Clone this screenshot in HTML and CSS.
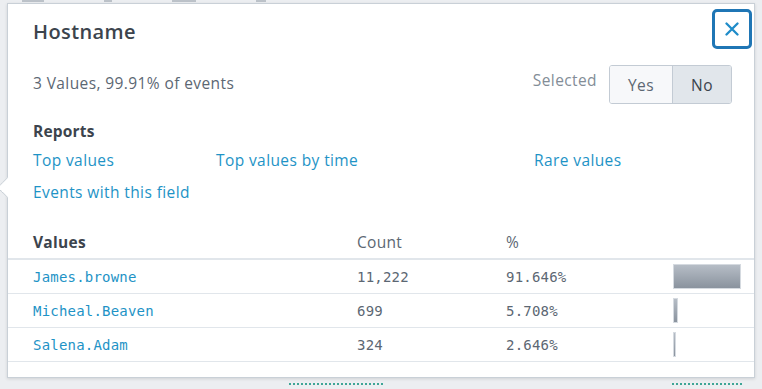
FILE: index.html
```html
<!DOCTYPE html>
<html lang="en">
<head>
    <meta charset="UTF-8">
    <meta name="viewport" content="width=device-width, initial-scale=1.0">
    <title>Field summary - Hostname</title>
    <link rel="stylesheet" href="styles.css">
</head>
<body>
    <!-- what is left visible of the field list behind the popup -->
    <div class="backdrop-top">
        <span class="smudge" style="width: 22px"></span>
        <span class="smudge" style="width: 8px"></span>
        <span class="smudge" style="width: 24px"></span>
        <span class="smudge" style="width: 10px"></span>
    </div>

    <div class="popup">
        <button class="close" title="Close">
            <svg width="14" height="14" viewBox="0 0 14 14">
                <path d="M1.5 1.5 L12.5 12.5 M12.5 1.5 L1.5 12.5" stroke="currentColor" stroke-width="2.3" stroke-linecap="round" fill="none"/>
            </svg>
        </button>

        <div class="popup-head">
            <h1>Hostname</h1>
        </div>

        <div class="summary">
            <span class="summary-text">3 Values, 99.91% of events</span>
            <div class="selected">
                <span class="selected-label">Selected</span>
                <div class="toggle">
                    <button class="toggle-btn">Yes</button>
                    <button class="toggle-btn active">No</button>
                </div>
            </div>
        </div>

        <!-- Reports -->
        <div class="reports">
            <h2>Reports</h2>
            <div class="report-links">
                <a href="#">Top values</a>
                <a href="#">Top values by time</a>
                <a href="#">Rare values</a>
                <a href="#">Events with this field</a>
            </div>
        </div>

        <!-- Values table -->
        <div class="values">
            <div class="values-row values-head">
                <span>Values</span>
                <span>Count</span>
                <span>%</span>
                <span></span>
            </div>
            <div class="values-row">
                <a href="#" class="mono">James.browne</a>
                <span class="mono">11,222</span>
                <span class="mono">91.646%</span>
                <span class="bar-cell"><span class="bar" style="width: 68px"></span></span>
            </div>
            <div class="values-row">
                <a href="#" class="mono">Micheal.Beaven</a>
                <span class="mono">699</span>
                <span class="mono">5.708%</span>
                <span class="bar-cell"><span class="bar" style="width: 5px"></span></span>
            </div>
            <div class="values-row">
                <a href="#" class="mono">Salena.Adam</a>
                <span class="mono">324</span>
                <span class="mono">2.646%</span>
                <span class="bar-cell"><span class="bar" style="width: 3px"></span></span>
            </div>
        </div>
    </div>

    <div class="backdrop-bottom">
        <span class="dash" style="width: 94px"></span>
        <span class="dash" style="width: 70px"></span>
    </div>
</body>
</html>
```

FILE: styles.css
```css
* {
    margin: 0;
    padding: 0;
    box-sizing: border-box;
}

body {
    font-family: 'Open Sans', 'Liberation Sans', sans-serif;
    background-color: #eceef1;
    color: #5c6773;
    overflow: hidden;
    height: 389px;
}

.backdrop-top {
    height: 3px;
    display: flex;
    align-items: flex-start;
    gap: 60px;
    padding-left: 22px;
}

.smudge {
    display: block;
    height: 2px;
    background-color: #bcc2c9;
}

.backdrop-bottom {
    display: flex;
    padding: 5px 0 0 289px;
    gap: 289px;
}

.dash {
    display: block;
    border-top: 2px dotted #3fa596;
}

.popup {
    position: relative;
    margin-left: 7px;
    width: 748px;
    height: 375px;
    background-color: #fff;
    border: 1px solid #c9d0d7;
    box-shadow: 0 1px 3px rgba(0, 0, 0, 0.12);
}

/* little arrow pointing at the field list */
.popup::before {
    content: '';
    position: absolute;
    left: -8px;
    top: 176px;
    width: 14px;
    height: 14px;
    background-color: #fff;
    border-left: 1px solid #c9d0d7;
    border-bottom: 1px solid #c9d0d7;
    transform: rotate(45deg);
}

.close {
    position: absolute;
    top: 5px;
    right: 2px;
    width: 40px;
    height: 40px;
    display: flex;
    align-items: center;
    justify-content: center;
    border: 3px solid #1f76b5;
    border-radius: 5px;
    background-color: #fff;
    color: #1f8cc9;
    cursor: pointer;
}

.popup-head {
    padding: 14px 25px 0;
}

h1 {
    font-size: 20px;
    font-weight: 600;
    letter-spacing: 0.4px;
    color: #3c444d;
    line-height: 28px;
}

.summary {
    display: flex;
    justify-content: space-between;
    align-items: center;
    padding: 19px 22px 0 25px;
    font-size: 15.5px;
    letter-spacing: 0.4px;
}

.summary-text {
    margin-top: -4px;
}

.selected {
    display: flex;
    align-items: center;
    gap: 12px;
}

.selected-label {
    color: #838d97;
    margin-top: -9px;
}

.toggle {
    display: flex;
    border: 1px solid #c3cbd4;
    border-radius: 3px;
    overflow: hidden;
}

.toggle-btn {
    font-family: inherit;
    font-size: 15.5px;
    letter-spacing: 0.4px;
    color: #5c6773;
    background-color: #f7f8fa;
    border: none;
    height: 37px;
    width: 62px;
    cursor: pointer;
}

.toggle-btn.active {
    width: 59px;
    background-color: #e1e6eb;
    border-left: 1px solid #c3cbd4;
    color: #3c444d;
}

.reports {
    padding: 16px 26px 0 25px;
}

h2 {
    font-size: 15.5px;
    font-weight: 700;
    letter-spacing: 0.2px;
    color: #3c444d;
    line-height: 22px;
}

.report-links {
    display: grid;
    grid-template-columns: 183px 318px auto;
    row-gap: 10px;
    margin-top: 7px;
}

.report-links a {
    font-size: 15.5px;
    letter-spacing: 0.4px;
    line-height: 22px;
    color: #1e93c6;
    text-decoration: none;
}

.values {
    margin-top: 22px;
}

.values-row {
    display: grid;
    grid-template-columns: 324px 149px 167px 1fr;
    align-items: center;
    height: 34px;
    padding-left: 25px;
    border-bottom: 1px solid #e1e6eb;
}

.values-head {
    height: 35px;
    font-size: 15.5px;
    letter-spacing: 0.3px;
    font-weight: 700;
    color: #3c444d;
    border-bottom-width: 2px;
}

.values-head span:nth-child(2),
.values-head span:nth-child(3) {
    font-weight: 400;
    color: #5c6773;
}

.mono {
    font-family: 'DejaVu Sans Mono', monospace;
    font-size: 14px;
    letter-spacing: 0.2px;
    color: #5c6773;
}

a.mono {
    color: #1e93c6;
    text-decoration: none;
}

.bar-cell {
    display: flex;
}

.bar {
    display: block;
    height: 25px;
    background: linear-gradient(#b6bdc6, #8a939e);
    border: 1px solid #d5dae0;
}
```
